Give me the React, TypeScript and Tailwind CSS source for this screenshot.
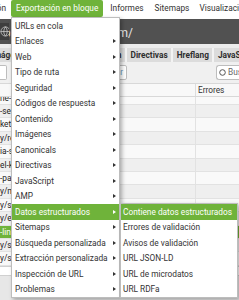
import { Globe } from "lucide-react";

type MenuItem = { label: string; sub?: boolean; active?: boolean };

const MENU: MenuItem[] = [
  { label: "URLs en cola" },
  { label: "Enlaces", sub: true },
  { label: "Web", sub: true },
  { label: "Tipo de ruta", sub: true },
  { label: "Seguridad", sub: true },
  { label: "Códigos de respuesta", sub: true },
  { label: "Contenido", sub: true },
  { label: "Imágenes", sub: true },
  { label: "Canonicals", sub: true },
  { label: "Directivas", sub: true },
  { label: "JavaScript", sub: true },
  { label: "AMP", sub: true },
  { label: "Datos estructurados", sub: true, active: true },
  { label: "Sitemaps", sub: true },
  { label: "Búsqueda personalizada", sub: true },
  { label: "Extracción personalizada", sub: true },
  { label: "Inspección de URL", sub: true },
  { label: "Problemas", sub: true },
];

const SUBMENU: MenuItem[] = [
  { label: "Contiene datos estructurados", active: true },
  { label: "Errores de validación" },
  { label: "Avisos de validación" },
  { label: "URL JSON-LD" },
  { label: "URL de microdatos" },
  { label: "URL RDFa" },
];

// left column of the table is scrolled, only the first chars show
const ROWS = [
  "ne-crawl-budget/",
  "-seo-spider/",
  "keting-digital/",
  "y/redirecciones/",
  "ia-seo-local/",
  "el-keyword-research/",
  "-paginacion/",
  "y/meta-robots/",
  "y/seo-tecnico/",
  "y/errores-404/",
  "-links-internos/",
  "y/seo-on-page/",
  "y/search-console/",
];

function Arrow({ white }: { white?: boolean }) {
  return (
    <span
      className={
        "h-0 w-0 border-y-[2.5px] border-l-[3px] border-y-transparent " +
        (white ? "border-l-white" : "border-l-[#333333]")
      }
    />
  );
}

function Tab({ children, className = "" }: { children: React.ReactNode; className?: string }) {
  return (
    <div className={"flex shrink-0 items-center whitespace-nowrap bg-[#dcdcdc] px-[3.5px] " + className}>
      {children}
    </div>
  );
}

export default function App() {
  return (
    <div className="relative h-[300px] w-[239px] overflow-hidden bg-[#e7e7e7] font-[family-name:Roboto,'Liberation_Sans',sans-serif] text-[8.3px] leading-none text-[#333333]">
      {/* Top menubar */}
      <div className="flex h-[19px] items-start bg-white">
        <div className="flex h-[17px] w-[11px] shrink-0 items-center justify-end overflow-hidden">
          <span className="whitespace-nowrap pr-[5px]">Configuración</span>
        </div>
        <div className="flex h-[17px] items-center whitespace-nowrap rounded-[2px] bg-[#6fb33a] px-[5px] text-white">
          Exportación en bloque
        </div>
        <div className="ml-[2px] flex h-[17px] items-center whitespace-nowrap px-[5px]">Informes</div>
        <div className="ml-[1px] flex h-[17px] items-center whitespace-nowrap px-[5px]">Sitemaps</div>
        <div className="flex h-[17px] items-center whitespace-nowrap px-[5px]">Visualizaciones</div>
      </div>

      {/* URL bar */}
      <div className="flex h-[25px] items-center bg-[#515151]">
        <div className="flex h-[17px] w-[9px] shrink-0 items-center justify-end overflow-hidden bg-[#3e3e3e]">
          <Globe size={11} strokeWidth={1.6} className="mr-[-2px] shrink-0 text-[#cfcfcf]" />
        </div>
        <div className="flex w-[124px] shrink-0 justify-end overflow-hidden pt-[2px] text-[12px] text-[#e6e6e6]">
          <span className="whitespace-nowrap">https://www.dominio.com/</span>
        </div>
      </div>
      <div className="h-[4px] bg-[#ececec]" />

      {/* Tabs */}
      <div className="flex h-[14px] gap-[2px] bg-[#f3f3f3] font-bold text-[#2e2e2e]">
        <div className="flex w-[125px] shrink-0 justify-between overflow-hidden">
          <Tab className="-ml-[12px]">Imágenes</Tab>
          <Tab>Paginación</Tab>
        </div>
        <Tab>Directivas</Tab>
        <Tab>Hreflang</Tab>
        <Tab>JavaScript</Tab>
      </div>

      {/* Filter / search row */}
      <div className="flex h-[21px] items-center bg-[#f0f0f0]">
        <div className="h-[15px] w-[7px] shrink-0 rounded-r-[2px] border border-l-0 border-[#bdbdbd] bg-white" />
        <div className="ml-[53px] flex h-[15px] w-[67px] shrink-0 items-center justify-end rounded-[2px] border border-[#bdbdbd] bg-white pr-[3px] text-[#6d9cc4]">
          Filtrar
        </div>
        <div className="ml-auto flex h-[15px] w-[23px] shrink-0 items-center gap-[2px] overflow-hidden rounded-l-[3px] border border-r-0 border-[#bdbdbd] bg-white pl-[2px] text-[#666666]">
          <svg width="7" height="7" viewBox="0 0 7 7" className="shrink-0">
            <circle cx="3.5" cy="3.5" r="2.8" fill="none" stroke="#555555" strokeWidth="1" />
          </svg>
          <span className="whitespace-nowrap">Buscar</span>
        </div>
      </div>

      {/* Table header */}
      <div className="grid h-[14px] grid-cols-[195px_1fr] border-y border-[#d8d8d8] bg-[#f8f8f8]">
        <div />
        <div className="flex items-center border-l border-[#dddddd] pl-[2px]">Errores</div>
      </div>

      {/* Table body (scrolled) */}
      <div className="h-[169px] overflow-hidden">
        <div className="-mt-[5.4px]">
          {ROWS.map((r, i) => {
            const sel = i === 10;
            return (
              <div
                key={i}
                className={
                  "grid h-[13.4px] grid-cols-[195px_1fr] border-b border-[#e2e2e2] " +
                  (sel ? "bg-[#6fb33a] text-white" : i % 2 === 0 ? "bg-[#f9f9f9] text-[#222222]" : "bg-[#efefef] text-[#222222]")
                }
              >
                <div className="flex items-center overflow-hidden whitespace-nowrap">{r}</div>
                <div className="border-l border-[#e2e2e2]" />
              </div>
            );
          })}
        </div>
      </div>
      <div className="h-[10px] border-y border-[#d0d0d0] bg-white" />

      {/* Dropdown menu */}
      <div className="absolute left-[11px] top-[17px] w-[109px] border border-[#bdbdbd] bg-white shadow-[2px_2px_4px_rgba(0,0,0,0.3)]">
        {MENU.map((m) => (
          <div
            key={m.label}
            className={
              "flex h-[15.5px] items-center justify-between whitespace-nowrap pl-[3px] pr-[3px] " +
              (m.active ? "bg-[#6fb33a] text-white" : "")
            }
          >
            <span>{m.label}</span>
            {m.sub && <Arrow white={m.active} />}
          </div>
        ))}
      </div>

      {/* Submenu */}
      <div className="absolute left-[120px] top-[203px] w-[118px] border border-[#bdbdbd] bg-white shadow-[2px_2px_4px_rgba(0,0,0,0.3)]">
        {SUBMENU.map((m) => (
          <div
            key={m.label}
            className={
              "flex h-[15.5px] items-center whitespace-nowrap pl-[2px] " +
              (m.active ? "bg-[#6fb33a] text-white" : "")
            }
          >
            {m.label}
          </div>
        ))}
      </div>
    </div>
  );
}
